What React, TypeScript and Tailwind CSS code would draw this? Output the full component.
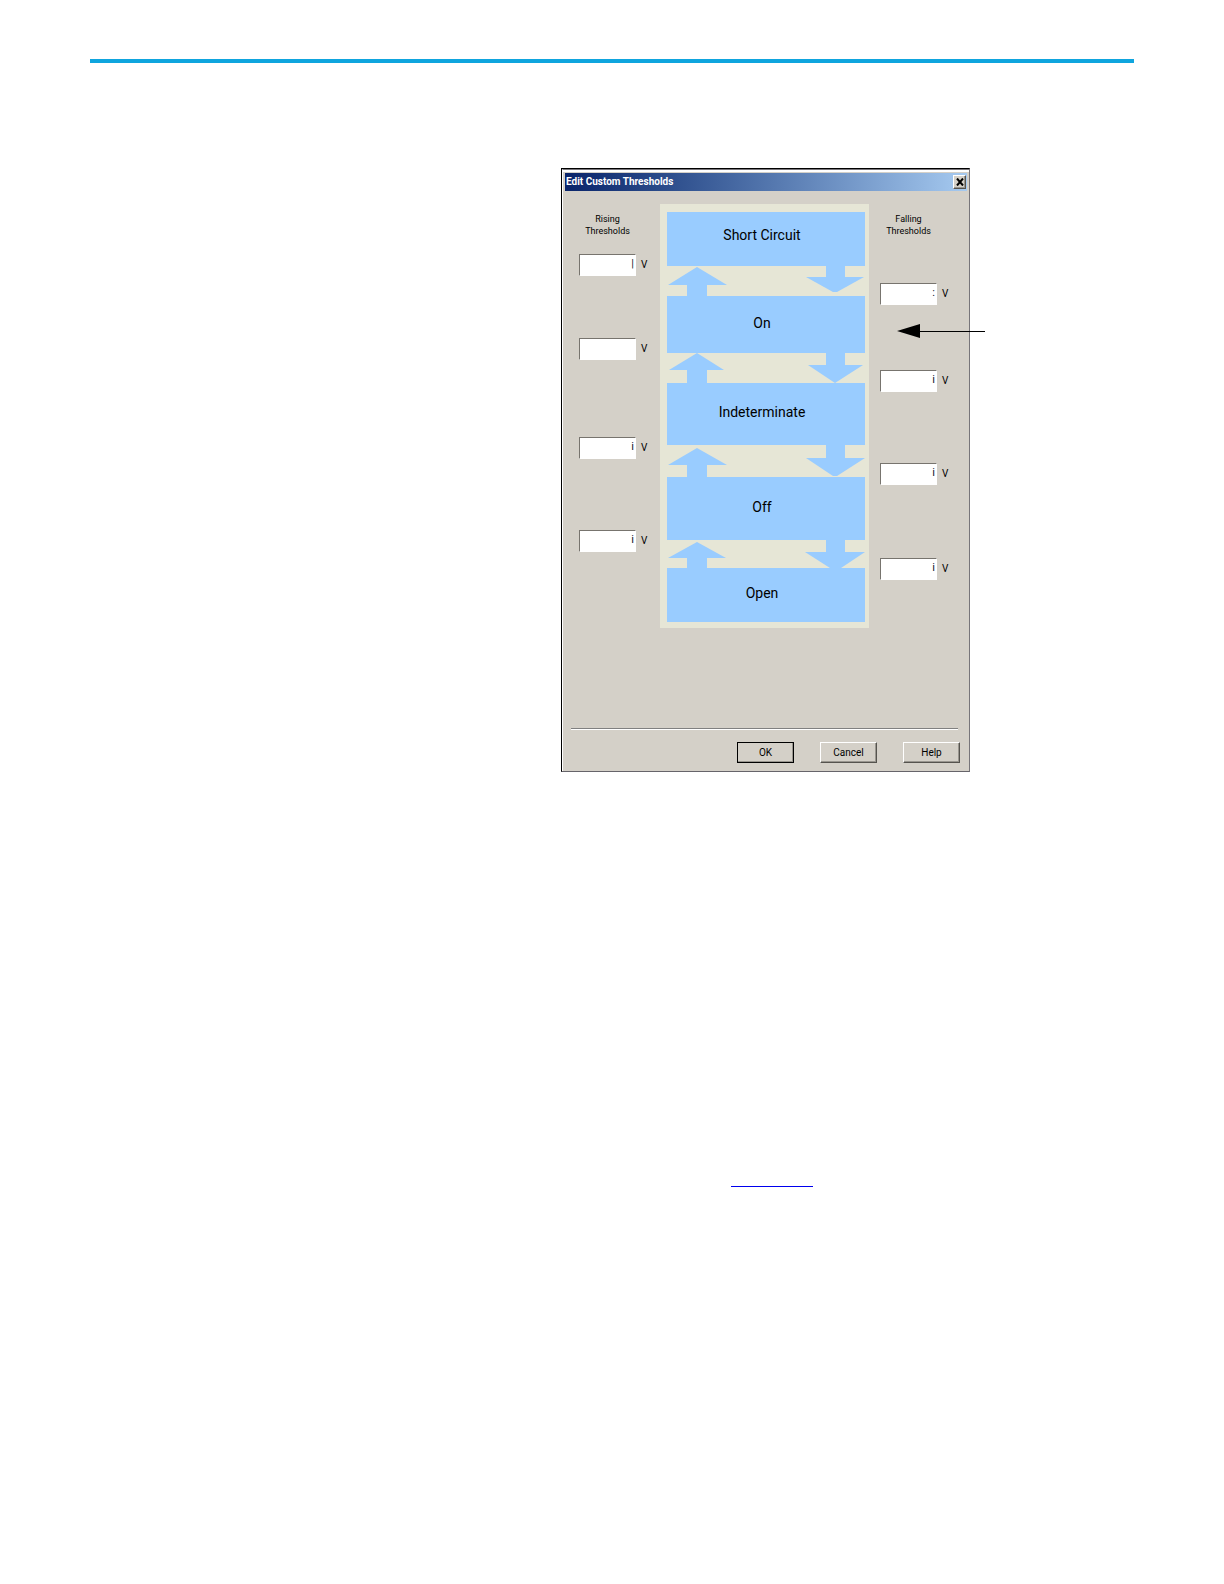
import { useId } from 'react';

interface Field {
  value: string;
  spacing: string;
}

interface Gap {
  height: number;
  up: string;
  down: string;
}

const risingFields: Field[] = [
  { value: '|', spacing: 'mt-[17px]' },
  { value: '', spacing: 'mt-[62px]' },
  { value: 'i', spacing: 'mt-[77px]' },
  { value: 'i', spacing: 'mt-[71px]' },
];

const fallingFields: Field[] = [
  { value: ':', spacing: 'mt-[46px]' },
  { value: 'i', spacing: 'mt-[65px]' },
  { value: 'i', spacing: 'mt-[71px]' },
  { value: 'i', spacing: 'mt-[73px]' },
];

const states = [
  { name: 'Short Circuit', height: 'h-[54px] pb-2' },
  { name: 'On', height: 'h-[57px] pb-1' },
  { name: 'Indeterminate', height: 'h-[62px] pb-1' },
  { name: 'Off', height: 'h-[63px] pb-1' },
  { name: 'Open', height: 'h-[54px] pb-1' },
];

const gaps: Gap[] = [
  { height: 30, up: '30,1 60,19 40,19 40,30 20,30 20,19 1,19', down: '159,0 178,0 178,11 197,11 170,26 166,26 139,11 159,11' },
  { height: 30, up: '30,0 57,17 40,17 40,30 20,30 20,17 2,17', down: '159,0 178,0 178,12 196,12 168,30 141,12 159,12' },
  { height: 32, up: '30,3 60,20 40,20 40,32 20,32 20,20 1,20', down: '159,0 178,0 178,13 198,13 170,31 166,31 139,13 159,13' },
  { height: 28, up: '30,2 59,18 40,18 40,28 20,28 20,18 1,18', down: '159,0 178,0 178,12 198,12 174,28 163,28 138,12 159,12' },
];

function ThresholdField({ field, label }: { field: Field; label: string }) {
  const id = useId();
  return (
    <div className={`flex items-center gap-[5px] ${field.spacing}`}>
      <input
        id={id}
        type="text"
        aria-label={label}
        defaultValue={field.value}
        className="h-[22px] w-[57px] border border-t-[#77746e] border-l-[#77746e] border-r-white border-b-white bg-white px-px pb-1 text-right text-[11px] leading-4 text-[#101830] outline-none"
      />
      <label htmlFor={id} className="text-[10px] leading-3">V</label>
    </div>
  );
}

function ThresholdColumn({ title, fields, className }: { title: string; fields: Field[]; className: string }) {
  return (
    <div className={`pt-[9px] ${className}`}>
      <h2 className="w-[57px] text-center text-[9px] leading-3">
        {title}
        <br />
        Thresholds
      </h2>
      {fields.map((field, index) => (
        <ThresholdField key={index} field={field} label={`${title} threshold ${index + 1}`} />
      ))}
    </div>
  );
}

function StateDiagram() {
  return (
    <div className="w-[209px] bg-[#e6e6d6] pt-2 pr-1 pb-[6px] pl-[7px]">
      {states.map((state, index) => (
        <div key={state.name}>
          <div className={`flex items-center justify-center bg-[#99ccff] pr-2 text-[14px] leading-5 ${state.height}`}>
            {state.name}
          </div>
          {gaps[index] && (
            <svg
              width="198"
              height={gaps[index].height}
              viewBox={`0 0 198 ${gaps[index].height}`}
              fill="#99ccff"
              className="block"
              aria-hidden="true"
            >
              <polygon points={gaps[index].up} />
              <polygon points={gaps[index].down} />
            </svg>
          )}
        </div>
      ))}
    </div>
  );
}

const bevel = 'border border-t-white border-l-white border-r-[#55534e] border-b-[#55534e] shadow-[inset_-1px_-1px_0_#99968f]';

function ThresholdDialog() {
  return (
    <section className="relative w-[409px] border border-t-black border-l-black border-r-[#77757a] border-b-[#66646a] bg-[#d4d0c8] font-[Roboto,'Liberation_Sans',sans-serif] text-black">
      <div className="border-t border-l border-t-[#77757a] border-l-white pt-[3px] pr-[2px] pb-2 pl-[2px] shadow-[inset_0_2px_0_#fff]">
        {/* Title bar */}
        <div className="flex h-[18px] items-center justify-between bg-linear-to-r from-[#0a246a] to-[#a6caf0] pr-px">
          <h1 className="pl-px text-[10px] leading-4 font-bold text-white">Edit Custom Thresholds</h1>
          <button type="button" aria-label="Close" className={`flex h-[14px] w-[13px] items-center justify-center bg-[#d4d0c8] ${bevel}`}>
            <svg width="8" height="8" viewBox="0 0 8 8" stroke="#000" strokeWidth="2" aria-hidden="true">
              <path d="M1 0.5L7 7.5M7 0.5L1 7.5" />
            </svg>
          </button>
        </div>

        {/* Thresholds */}
        <div className="flex pt-[13px]">
          <ThresholdColumn title="Rising" fields={risingFields} className="w-[95px] pl-[14px]" />
          <StateDiagram />
          <ThresholdColumn title="Falling" fields={fallingFields} className="pl-[11px]" />
        </div>

        {/* Actions */}
        <div className="mt-[100px] mr-[9px] ml-[6px] border-t border-b border-t-[#808080] border-b-white" />
        <div className="mt-3 mr-[7px] flex justify-end gap-[26px] text-[10px] leading-4">
          <button type="button" className={`h-[21px] w-[57px] outline-1 -outline-offset-1 outline-black ${bevel}`}>OK</button>
          <button type="button" className={`h-[21px] w-[57px] ${bevel}`}>Cancel</button>
          <button type="button" className={`h-[21px] w-[57px] ${bevel}`}>Help</button>
        </div>
      </div>

      {/* Callout arrow over the dialog edge */}
      <svg width="89" height="14" viewBox="0 0 89 14" className="absolute top-[155px] left-[335px]" aria-hidden="true">
        <path d="M20 7.5H88" stroke="#000" />
        <polygon points="0,7 23,0 23,14" />
      </svg>
    </section>
  );
}

export default function App() {
  return (
    <div className="min-h-screen bg-white px-[90px] pt-[59px]">
      <header className="h-1 bg-[#0fa5de]" />
      <main className="mt-[105px] grid grid-cols-[471px_1fr]">
        <div className="col-start-2">
          <ThresholdDialog />
          <a href="#thresholds" aria-label="Thresholds" className="mt-[395px] ml-[170px] block h-5 w-[82px] border-b border-solid border-b-[#0000ee]" />
        </div>
      </main>
    </div>
  );
}
